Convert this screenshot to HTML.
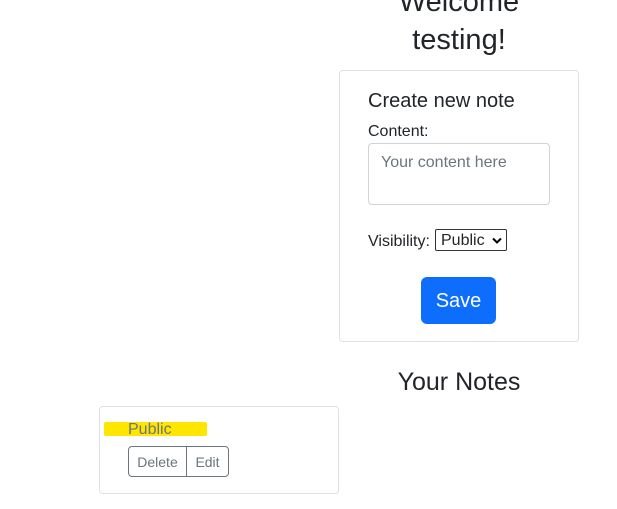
<!DOCTYPE html>
<html><head><style>
body{margin:0;width:617px;height:509px;position:relative;overflow:hidden;background:#fff;font-family:"Liberation Sans",sans-serif;color:#212529}
.a{position:absolute}
</style></head><body>
<div class="a" style="left:340px;width:238px;top:-17px;text-align:center;font-size:29px;line-height:38px">Welcome<br>testing!</div>
<div class="a" style="left:339px;top:70px;width:238px;height:270px;border:1px solid #dee2e6;border-radius:4px"></div>
<div class="a" style="left:368px;top:90px;font-size:20px">Create new note</div>
<div class="a" style="left:368px;top:123px;font-size:16px">Content:</div>
<div class="a" style="left:368px;top:143px;width:180px;height:60px;border:1px solid #ced4da;border-radius:4px"></div>
<div class="a" style="left:381px;top:154px;font-size:16px;color:#6c757d">Your content here</div>
<div class="a" style="left:368px;top:233px;font-size:16px">Visibility:</div>
<div class="a" style="left:435px;top:229px;width:72px;height:22px;border:1px solid #333;border-radius:2px;font-size:16px;line-height:22px;box-sizing:border-box;padding-left:5px">Public <svg class="a" style="right:4px;top:7px" width="10" height="7"><path d="M1 1.5L5 5.5L9 1.5" stroke="#000" stroke-width="2" fill="none"/></svg></div>
<div class="a" style="left:421px;top:277px;width:75px;height:47px;background:#0d6efd;border-radius:6px;color:#fff;font-size:20px;line-height:49px;text-align:center">Save</div>
<div class="a" style="left:340px;top:368px;width:238px;text-align:center;font-size:25px">Your Notes</div>
<div class="a" style="left:99px;top:406px;width:238px;height:86px;border:1px solid #dee2e6;border-radius:4px"></div>
<div class="a" style="left:104px;top:422px;width:103px;height:14px;background:#ffe600;border-radius:2px"></div>
<div class="a" style="left:128px;top:421px;font-size:16px;color:#6c757d">Public</div>
<div class="a" style="left:128px;top:446px;width:99px;height:29px;border:1px solid #6c757d;border-radius:4px;font-size:14px;color:#6c757d;line-height:31px">
<span class="a" style="left:0;width:57px;text-align:center;border-right:1px solid #6c757d;height:29px">Delete</span><span class="a" style="left:58px;width:41px;text-align:center">Edit</span></div>
</body></html>
